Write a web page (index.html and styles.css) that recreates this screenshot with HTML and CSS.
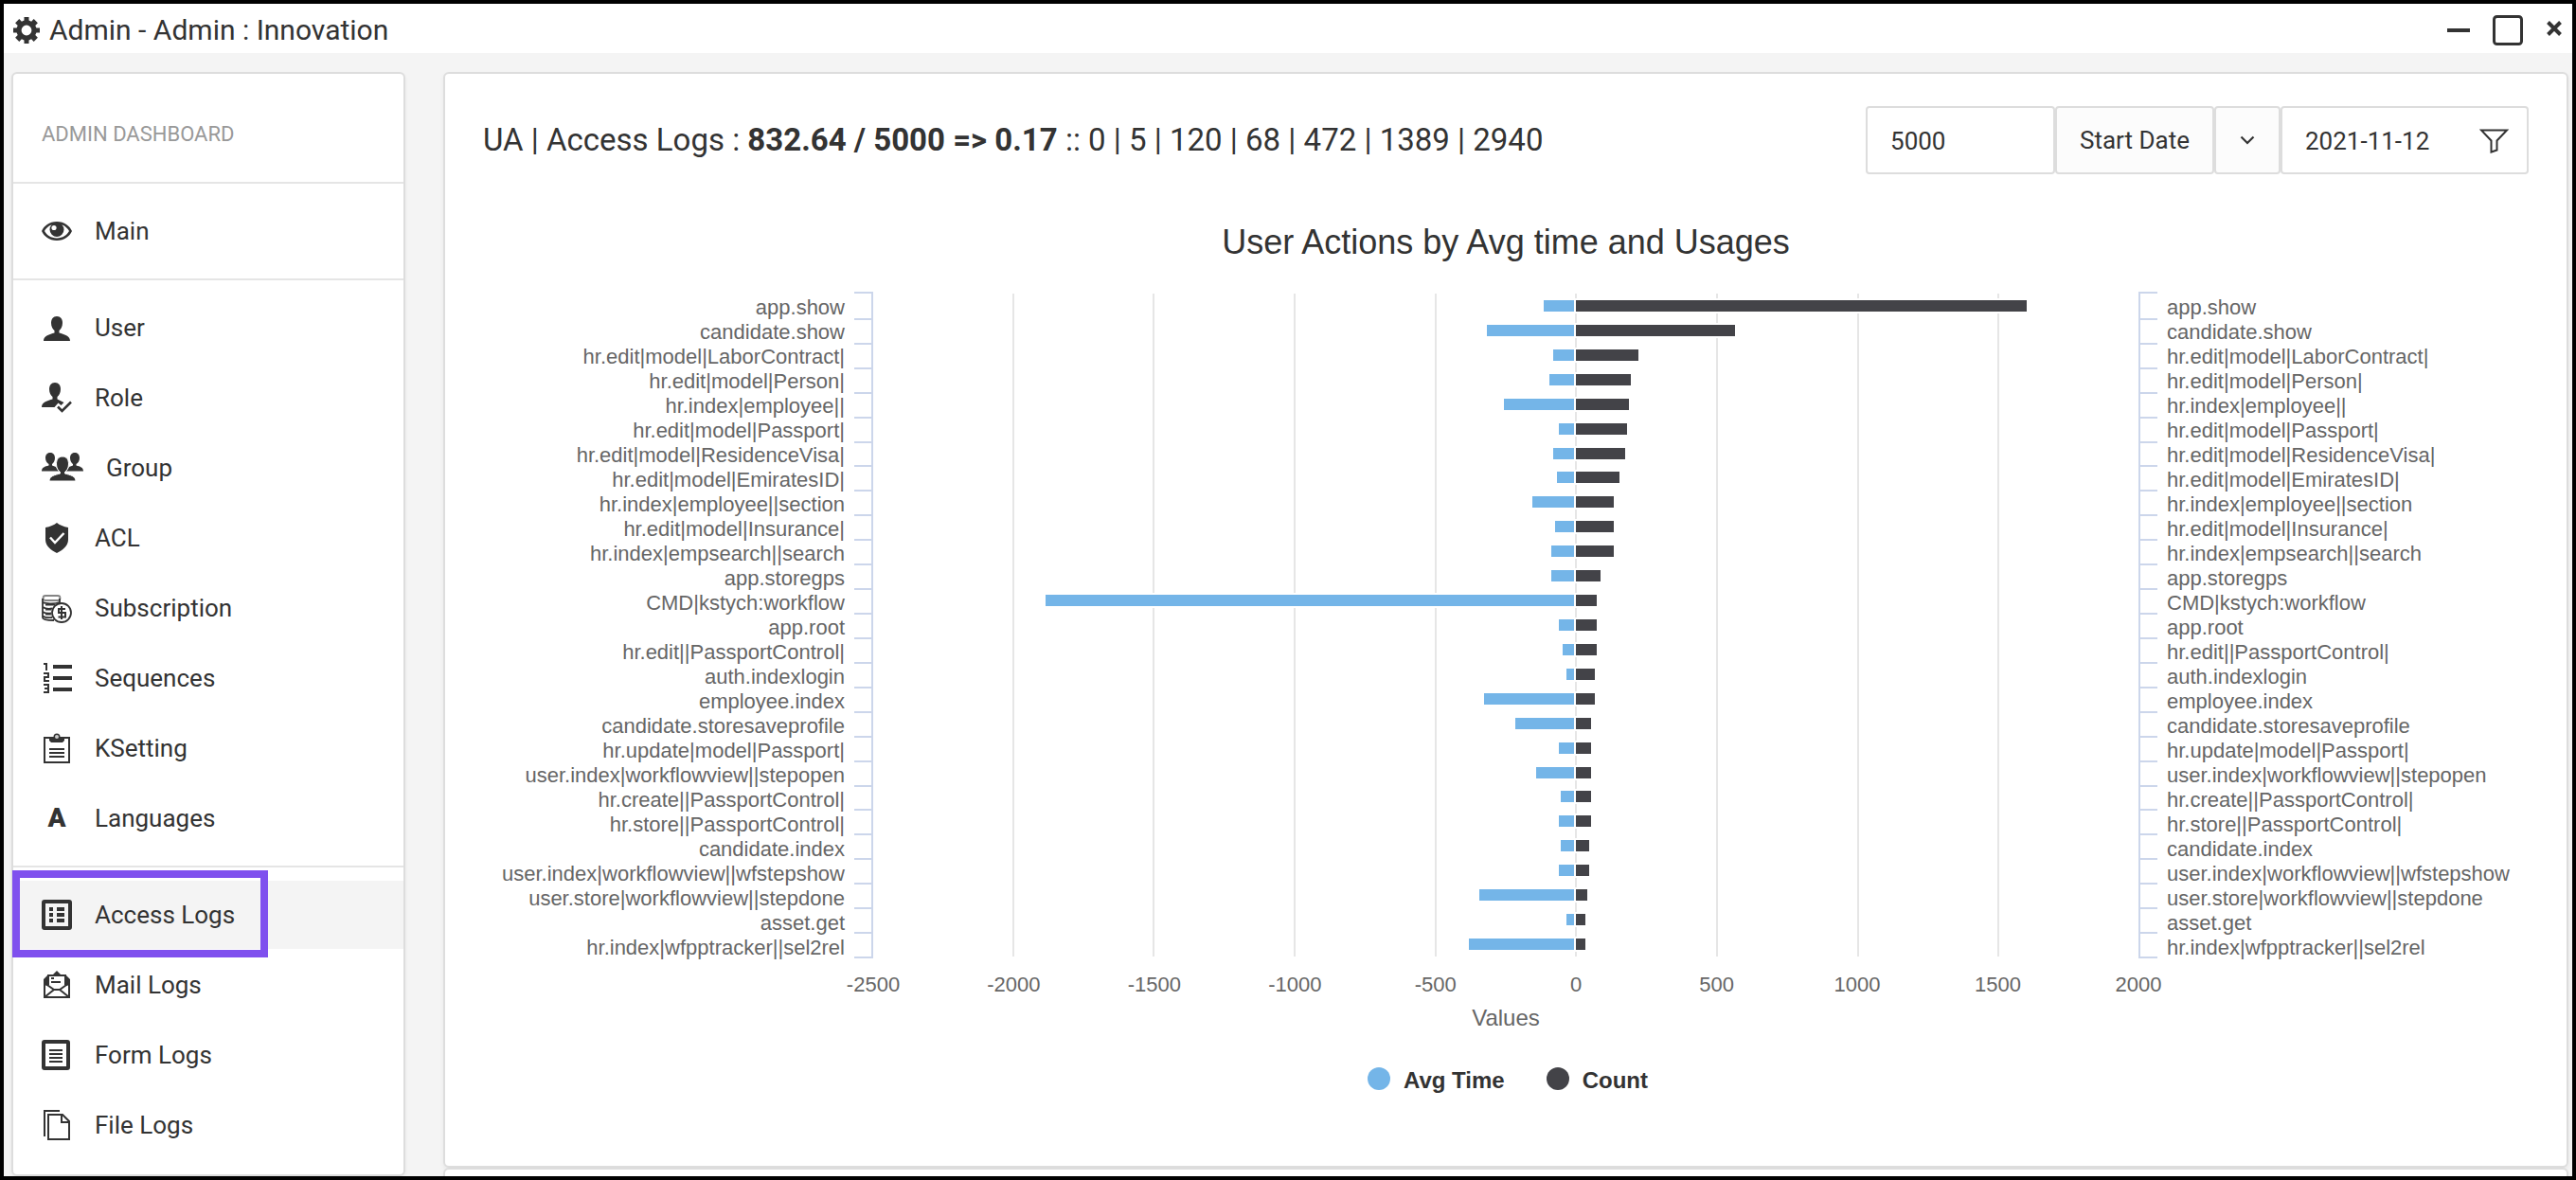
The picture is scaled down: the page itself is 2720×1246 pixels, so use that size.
FILE: index.html
```html
<!DOCTYPE html>
<html lang="en">
<head>
<meta charset="utf-8">
<title>Admin - Admin : Innovation</title>
<link rel="stylesheet" href="styles.css">
</head>
<body>
<div class="window">
  <header class="titlebar">
    <svg class="gear" viewBox="0 0 28 28" aria-hidden="true"><path fill-rule="evenodd" d="M11.5 0h5v3.6l2.6 1.1 2.6-2.6 4.2 4.2-2.6 2.6 1.1 2.6H28v5h-3.6l-1.1 2.6 2.6 2.6-4.2 4.2-2.6-2.6-2.6 1.1V28h-5v-3.6l-2.6-1.1-2.6 2.6-4.2-4.2 2.6-2.6-1.1-2.6H0v-5h3.6l1.1-2.6-2.6-2.6 4.2-4.2 2.6 2.6 2.6-1.1zM14 8.6a5.4 5.4 0 1 0 0 10.8 5.4 5.4 0 0 0 0-10.8z"/></svg>
    <span class="title">Admin - Admin : Innovation</span>
    <div class="window-buttons">
      <button type="button" aria-label="Minimize"><svg width="24" height="32" viewBox="0 0 24 32"><path d="M0 14h24v4H0z"/></svg></button>
      <button type="button" aria-label="Maximize"><svg width="32" height="32" viewBox="0 0 32 32"><rect class="line" x="1.5" y="1.5" width="29" height="29" rx="3" stroke-width="3"/></svg></button>
      <button type="button" aria-label="Close"><svg width="18" height="32" viewBox="0 0 18 32"><path class="line" d="M2.500 7.500l13 13M15.500 7.500l-13 13" stroke-width="4"/></svg></button>
    </div>
  </header>

  <div class="content">
    <nav class="sidebar" aria-label="Admin dashboard">
      <h2 class="sidebar-title">ADMIN DASHBOARD</h2>
      <ul class="menu">
        <li><a href="#main"><svg class="icon" viewBox="0 0 32 32"><path fill-rule="evenodd" d="M16 6C8 6 2.500 10.500 0 16c2.500 5.500 8 10 16 10s13.500-4.500 16-10C29.500 10.500 24 6 16 6zm0 2.600c6.500 0 10.500 3 13 7.400-2.500 4.400-6.500 7.400-13 7.400S5.500 20.400 3 16c2.500-4.400 6.500-7.400 13-7.400z"/><circle cx="16" cy="14.500" r="7.500"/><circle cx="13" cy="12.500" r="2.600" fill="#fff"/></svg>Main</a></li>
      </ul>
      <ul class="menu">
        <li><a href="#user"><svg class="icon" viewBox="0 0 32 32"><path d="M16 4c4 0 6 3 6 7s-1.800 6.500-3.500 8v2.500c5 1.500 11.500 3 11.500 8.500H2c0-5.500 6.500-7 11.500-8.500V19C11.800 17.500 10 15 10 11s2-7 6-7z"/></svg>User</a></li>
        <li><a href="#role"><svg class="icon" viewBox="0 0 32 32"><path d="M14 0c4 0 6 3 6 7s-1.800 6.500-3.500 8v2.500l7 3.500-3 3-3-2.500-4 4.500H0c0-5.500 6.500-7 11.500-8.500V15C9.800 13.500 8 11 8 7s2-7 6-7z"/><path class="line" d="M17 25.500l4.500 4.500L31 20.500" stroke-width="2.500"/></svg>Role</a></li>
        <li><a href="#group"><svg class="icon icon-wide" viewBox="0 0 44 32"><path d="M9 0c3.500 0 5 2.500 5 5.500S12.500 11 11 12v1.500l4 1.500c1 2 2 3.500 3 4.500H0c0-4 3.500-5 7.500-6V12C5.500 11 4 8.500 4 5.500S5.500 0 9 0zM35 0c-3.500 0-5 2.500-5 5.500S31.500 11 33 12v1.500L29 15c-1 2-2 3.500-3 4.500h18c0-4-3.500-5-7.500-6V12c2-1 3.500-3.500 3.500-6.500S38.500 0 35 0z"/><path d="M22 4c4.500 0 6.500 3.500 6.500 8s-2 7-4 8.500V22c5.500 1.500 11.500 2.500 11.500 8H8c0-5.500 6-6.500 11.500-8v-1.500c-2-1.500-4-4-4-8.500s2-8 6.500-8z" stroke="#fff"/></svg>Group</a></li>
        <li><a href="#acl"><svg class="icon" viewBox="0 0 32 32"><path d="M16 0c3 2.500 7 4 12 5v13c0 6.500-6 11-12 14C10 29 4 24.500 4 18V5c5-1 9-2.500 12-5z"/><path d="M9 15.500l5 5.500 9.500-10" fill="none" stroke="#fff" stroke-width="2.500"/></svg>ACL</a></li>
        <li><a href="#subscription"><svg class="icon" viewBox="0 0 32 32"><g class="line" stroke-width="1.800"><rect x="1.500" y="3" width="18" height="5" rx="2.500" opacity=".6"/><path d="M1 6v20c0 2 4 3 12 3M1 10c3 1.500 12 2 18 0V6M1 15c3 2 7 2 10 1.500M1 20c3 2 6 2 9 1.500M1 24.500c3 2 6 2 10 1.500M4 12.500h10M4 17.500h6M4 22.500h6"/><circle cx="21" cy="21" r="10"/><path d="M25 17h-7v4h7v4.500h-7.500M21 14v14" stroke-width="2"/></g></svg>Subscription</a></li>
        <li><a href="#sequences"><svg class="icon" viewBox="0 0 32 32"><path d="M12 2h20v4H12zM12 14h20v4H12zM12 26h20v4H12z"/><path class="line" d="M2 1h3v7M2 11h5v4H3v4h5M2 23h5v8H2M3 27h4" stroke-width="2"/></svg>Sequences</a></li>
        <li><a href="#ksetting"><svg class="icon" viewBox="0 0 32 32"><path class="line" d="M3 5h26v26H3zM8 17h16M8 21h16M8 25h16" stroke-width="2"/><path d="M8 4h4.500a3.500 3.500 0 0 1 7 0H24v4l-2 2H10l-2-2z"/><circle cx="16" cy="4" r="2" fill="#ccc"/></svg>KSetting</a></li>
        <li><a href="#languages"><span class="icon icon-letter" aria-hidden="true">A</span>Languages</a></li>
      </ul>
      <ul class="menu">
        <li class="active"><a href="#access-logs" aria-current="page"><svg class="icon" viewBox="0 0 32 32"><rect class="line" x="2" y="2" width="28" height="28" rx="1" stroke-width="4"/><path d="M8 8h4v4H8zM16 8h8v4h-8zM8 14h4v4H8zM16 14h8v4h-8zM8 20h4v4H8zM16 20h8v4h-8z"/></svg>Access Logs</a></li>
        <li><a href="#mail-logs"><svg class="icon" viewBox="0 0 32 32"><path d="M2 10l5-5h5l4-4 4 4h5l5 5v6l-5 1V7H7v10l-5-1z"/><g class="line" stroke-width="2"><path d="M3 12v17h26V12M3 14l10 7h6l10-7M3 29l10-8M29 29l-10-8M7 16V6h18v10"/><path d="M10 9h3M10 13h10"/></g></svg>Mail Logs</a></li>
        <li><a href="#form-logs"><svg class="icon" viewBox="0 0 32 32"><rect class="line" x="2" y="2" width="26" height="28" rx="1" stroke-width="4"/><path d="M8 10h14v2H8zM8 14h14v2H8zM8 18h14v2H8zM8 22h14v2H8z"/></svg>Form Logs</a></li>
        <li><a href="#file-logs"><svg class="icon" viewBox="0 0 32 32"><path class="line" d="M3 28V1h16M7 5h15l7 7v19H7zM21 5v8h8" stroke-width="2"/></svg>File Logs</a></li>
      </ul>
      <div class="focus-frame"></div>
    </nav>

    <main class="main">
      <section class="card">
        <div class="card-header">
          <h1 class="heading">UA | Access Logs : <strong>832.64 / 5000 =&gt; 0.17</strong> :: 0 | 5 | 120 | 68 | 472 | 1389 | 2940</h1>
          <form class="filters">
            <input class="field limit" type="text" value="5000" aria-label="Row limit">
            <button class="btn" type="button">Start Date</button>
            <button class="btn caret" type="button" aria-label="Choose date field"><svg width="16" height="10" viewBox="0 0 16 10"><path class="line" d="M1.500 1.500L8 8l6.500-6.500" stroke-width="2.200"/></svg></button>
            <div class="field date">
              <input type="text" value="2021-11-12" aria-label="Date">
              <button type="button" aria-label="Filter"><svg width="32" height="26" viewBox="0 0 32 26"><path class="line" d="M2 1.500h27L18.500 12.500v10l-6 2v-12z" stroke-width="2"/></svg></button>
            </div>
          </form>
        </div>

        <figure class="chart" id="chart">
          <figcaption class="chart-title">User Actions by Avg time and Usages</figcaption>
          <div class="labels labels-left"></div>
          <div class="ticks ticks-left"></div>
          <div class="plot">
            <div class="gridlines"><i></i><i></i><i></i><i></i><i></i><i></i><i></i><i></i><i></i></div>
            <div class="bars"></div>
          </div>
          <div class="ticks ticks-right"></div>
          <div class="labels labels-right"></div>
          <div class="scale"><span>-2500</span><span>-2000</span><span>-1500</span><span>-1000</span><span>-500</span><span>0</span><span>500</span><span>1000</span><span>1500</span><span>2000</span></div>
          <div class="axis-title">Values</div>
          <div class="legend">
            <span class="key key-avg">Avg Time</span>
            <span class="key key-count">Count</span>
          </div>
        </figure>
      </section>
      <section class="card"></section>
    </main>
  </div>
</div>
<script src="chart.js"></script>
</body>
</html>
```
FILE: styles.css
```css
* { box-sizing: border-box; }

body {
  margin: 0;
  color: #333;
  font-family: Roboto, "Liberation Sans", sans-serif;
  font-size: 26px;
  line-height: 32px;
}

h1, h2, ul, figure { margin: 0; padding: 0; font-weight: 400; }
ul { list-style: none; }
svg { display: block; fill: #333; }
button, input { color: inherit; font: inherit; }
button { padding: 0; border: 0; background: none; }
.line { fill: none; stroke: #333; }

.window {
  display: flex;
  flex-direction: column;
  height: 100vh;
  border: 4px solid #000;
  background: #f4f4f4;
  overflow: hidden;
}

.titlebar {
  display: flex;
  flex: none;
  align-items: center;
  gap: 10px;
  height: 52px;
  padding: 4px 10px 0;
  background: #fff;
}
.gear { width: 28px; height: 28px; }
.title { flex: 1; font-size: 30px; }
.window-buttons { display: flex; gap: 24px; }

.content {
  display: flex;
  flex: 1;
  gap: 40px;
  min-height: 0;
  padding: 20px 4px 0 8px;
}

.sidebar, .card {
  border: 2px solid #ddd;
  border-radius: 6px;
  background: #fff;
  box-shadow: 0 2px 4px rgba(0, 0, 0, .05);
}
.sidebar {
  position: relative;
  flex: none;
  width: 416px;
}
.sidebar-title {
  padding: 48px 30px 34px;
  color: #999;
  font-size: 22px;
}
.menu {
  display: grid;
  gap: 2px;
  padding: 14px 0 12px;
  border-top: 2px solid #e5e5e5;
}
.menu + .menu { margin-top: 2px; }
.menu a {
  display: flex;
  align-items: center;
  gap: 24px;
  height: 72px;
  padding: 0 30px;
  color: inherit;
  text-decoration: none;
}
.active { background: #f4f4f4; }
.icon { flex: none; width: 32px; height: 32px; }
.icon-wide { width: 44px; }
.icon-letter { font-size: 28px; font-weight: 900; text-align: center; }

/* Highlight that floats over the current menu entry */
.focus-frame {
  position: absolute;
  top: 841px;
  left: -1px;
  width: 270px;
  height: 92px;
  border: 8px solid #7f50ee;
}

.main { flex: 1; min-width: 0; }
.main .card { min-height: 100px; padding: 34px 40px 76px; }
.card-header { display: flex; align-items: center; justify-content: space-between; }
.heading { font-size: 33px; line-height: 40px; }

.filters { display: flex; }
.field, .btn {
  height: 72px;
  border: 2px solid #ddd;
  border-radius: 4px;
}
.field { padding: 2px 24px 0; background: #fff; }
.limit { width: 200px; }
.btn { padding: 0 24px; background: #fcfcfc; }
.caret { display: grid; place-items: center; width: 70px; padding: 0; }
.date { display: flex; align-items: center; width: 262px; padding-right: 18px; }
.date input { flex: 1; min-width: 0; padding: 0; border: 0; background: none; }

.chart {
  display: grid;
  grid-template-columns: 382px 30px 1fr 30px 382px;
  padding-top: 50px;
  color: #666;
  font-family: "Liberation Sans", Arial, sans-serif;
  font-size: 22px;
  line-height: 26px;
}
.chart-title, .axis-title, .legend { grid-column: 1 / -1; text-align: center; }
.chart-title {
  margin-bottom: 30px;
  color: #333;
  font-size: 36px;
  line-height: 44px;
}
.labels, .ticks, .bars { display: grid; grid-template-rows: repeat(27, 1fr); }
.labels, .plot { height: 700px; }
.labels {
  grid-template-rows: repeat(27, 26px);
  margin-top: 4px;
  white-space: nowrap;
}
.labels-left { text-align: right; }
.ticks { height: 704px; border: 2px solid #ccd6eb; }
.ticks-left { margin-left: 10px; border-left: 0; }
.ticks-right { margin-right: 10px; border-right: 0; }
.ticks i + i { border-top: 2px solid #ccd6eb; }

.plot { display: grid; grid-template: 1fr / 1fr; margin: 2px 0; }
.gridlines, .bars { grid-area: 1 / 1; }
.gridlines { display: flex; }
.gridlines i { flex: 1; border-right: 2px solid #e6e6e6; }
.gridlines i:last-child { border: 0; }
.row { display: grid; grid-template-columns: 5fr 4fr; align-items: center; }
.negative { display: flex; justify-content: flex-end; padding-right: 2px; }
.bar { height: 12px; box-shadow: 0 0 0 2px #fff; }
.avg { background: #74b5e8; }
.count { background: #434348; }

.scale {
  display: flex;
  grid-column: 3;
  margin: 15px calc(-100% / 18) 0;
  text-align: center;
}
.scale span { flex: 1; }
.axis-title { margin-top: 8px; font-size: 24px; line-height: 28px; }
.legend {
  display: flex;
  justify-content: center;
  gap: 44px;
  margin-top: 38px;
  padding-left: 4px;
  color: #333;
  font-size: 24px;
  font-weight: 700;
  line-height: 28px;
}
.key { display: flex; gap: 14px; }
.key::before { content: ""; width: 24px; height: 24px; border-radius: 50%; }
.key-avg::before { background: #74b5e8; }
.key-count::before { background: #434348; }
```
FILE: chart.js
```js
// [action, average time, count]
const actions = [
  ["app.show", 109, 1602],
  ["candidate.show", 310, 565],
  ["hr.edit|model|LaborContract|", 75, 222],
  ["hr.edit|model|Person|", 88, 195],
  ["hr.index|employee||", 250, 188],
  ["hr.edit|model|Passport|", 54, 182],
  ["hr.edit|model|ResidenceVisa|", 75, 175],
  ["hr.edit|model|EmiratesID|", 61, 155],
  ["hr.index|employee||section", 149, 134],
  ["hr.edit|model|Insurance|", 68, 134],
  ["hr.index|empsearch||search", 81, 134],
  ["app.storegps", 81, 88],
  ["CMD|kstych:workflow", 1886, 74],
  ["app.root", 54, 74],
  ["hr.edit||PassportControl|", 41, 74],
  ["auth.indexlogin", 28, 67],
  ["employee.index", 323, 67],
  ["candidate.storesaveprofile", 209, 54],
  ["hr.update|model|Passport|", 54, 54],
  ["user.index|workflowview||stepopen", 135, 54],
  ["hr.create||PassportControl|", 48, 54],
  ["hr.store||PassportControl|", 54, 54],
  ["candidate.index", 48, 47],
  ["user.index|workflowview||wfstepshow", 54, 47],
  ["user.store|workflowview||stepdone", 337, 40],
  ["asset.get", 28, 34],
  ["hr.index|wfpptracker||sel2rel", 377, 34]
];

const chart = document.getElementById("chart");
const make = (tag, className, text) => {
  const node = document.createElement(tag);
  if (className) node.className = className;
  if (text) node.textContent = text;
  return node;
};
const bar = (className, value, max) => {
  const node = make("div", "bar " + className);
  node.style.width = (value / max) * 100 + "%";
  return node;
};

for (const [name, avg, count] of actions) {
  for (const labels of chart.querySelectorAll(".labels")) labels.append(make("span", "", name));
  for (const ticks of chart.querySelectorAll(".ticks")) ticks.append(make("i"));
  const row = make("div", "row");
  const negative = make("div", "negative");
  negative.append(bar("avg", avg, 2500));
  row.append(negative, bar("count", count, 2000));
  chart.querySelector(".bars").append(row);
}
```
